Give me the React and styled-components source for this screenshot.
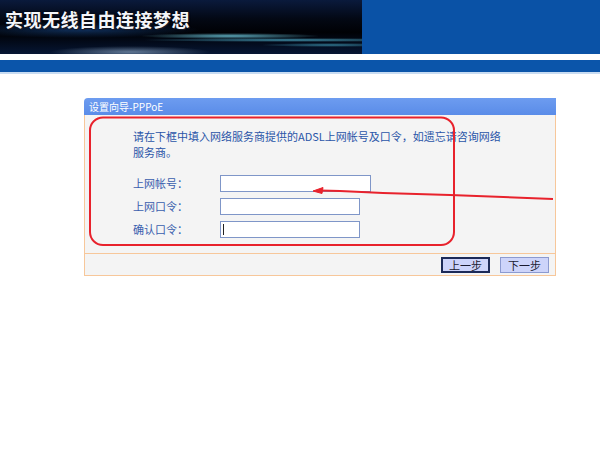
import React from "react";
import styled, { createGlobalStyle } from "styled-components";

const GlobalStyle = createGlobalStyle`
  html, body {
    margin: 0;
    padding: 0;
    background: #ffffff;
  }
  body {
    font-family: "Noto Sans CJK SC", "Liberation Sans", sans-serif;
  }
`;

export default function App() {
  return (
    <Page>
      <GlobalStyle />
      <Header>
        <Banner>
          <Slogan>实现无线自由连接梦想</Slogan>
        </Banner>
        <BannerFill />
      </Header>
      <Stripe />
      <Band />
      <Main>
        <Panel>
          <Title>设置向导-PPPoE</Title>
          <Body>
            <Intro>
              请在下框中填入网络服务商提供的ADSL上网帐号及口令，如遗忘请咨询网络服务商。
            </Intro>
            <Form>
              <Label>上网帐号：</Label>
              <Input $w={151} />
              <Label>上网口令：</Label>
              <Input $w={140} />
              <Label>确认口令：</Label>
              <Input $w={140} $focus />
            </Form>
          </Body>
          <Footer>
            <Button $active>上一步</Button>
            <Button>下一步</Button>
          </Footer>
        </Panel>
      </Main>
      <Marks width="600" height="450" viewBox="0 0 600 450">
        <rect x="90" y="117.5" width="364" height="127.5" rx="13" fill="none" stroke="#e8222c" strokeWidth="2" />
        <path d="M553 199 L450 195 L383 193 L340 191 L320 190.5" fill="none" stroke="#e8222c" strokeWidth="2" />
        <path d="M313 191 L323 187.5 L322 193.5 Z" fill="#e8222c" stroke="#e8222c" strokeWidth="1" />
      </Marks>
    </Page>
  );
}

/* Styles */

const Page = styled.div`
  position: relative;
  width: 600px;
  height: 450px;
  overflow: hidden;
  background: #ffffff;
`;

const Header = styled.div`
  display: flex;
  height: 54px;
`;

const Banner = styled.div`
  width: 362px;
  display: flex;
  align-items: flex-start;
  padding: 7px 0 0 5px;
  box-sizing: border-box;
  background:
    radial-gradient(ellipse 90px 3px at 230px 36px, rgba(120, 220, 240, 0.75), transparent),
    radial-gradient(ellipse 150px 2px at 290px 40px, rgba(90, 200, 230, 0.7), transparent),
    radial-gradient(ellipse 70px 2px at 330px 45px, rgba(80, 190, 220, 0.6), transparent),
    radial-gradient(ellipse 80px 6px at 130px 52px, rgba(170, 200, 230, 0.55), transparent),
    radial-gradient(ellipse 120px 8px at 80px 30px, rgba(30, 90, 170, 0.5), transparent),
    linear-gradient(180deg, #0a1a3c 0%, #030814 35%, #000105 60%, #061634 100%);
`;

const Slogan = styled.div`
  color: #f4f6fa;
  font-size: 18px;
  font-weight: 700;
  letter-spacing: 0.5px;
  line-height: 24px;
  text-shadow: 0 0 2px #000, 1px 1px 1px #223;
`;

const BannerFill = styled.div`
  flex: 1;
  background: #0a52a6;
`;

const Stripe = styled.div`
  height: 6px;
  background: #ffffff;
`;

const Band = styled.div`
  height: 12px;
  background: #0b55aa;
  border-bottom: 2px solid #c8dcf2;
`;

const Main = styled.div`
  padding: 24px 0 0 84px;
`;

const Panel = styled.div`
  width: 472px;
`;

const Title = styled.div`
  height: 17px;
  line-height: 17px;
  padding-left: 5px;
  background: linear-gradient(180deg, #6d9cf0 0%, #5a8ce8 100%);
  border-radius: 4px 0 0 0;
  color: #ffffff;
  font-size: 10px;
`;

const Body = styled.div`
  height: 138px;
  box-sizing: border-box;
  padding: 13px 0 0 48px;
  background: #f4f4f4;
  border-left: 1px solid #f7c79a;
  border-right: 1px solid #f7c79a;
`;

const Intro = styled.p`
  margin: 0;
  width: 378px;
  color: #2a55a8;
  font-size: 11px;
  line-height: 16px;
`;

const Form = styled.div`
  display: grid;
  grid-template-columns: 87px auto;
  row-gap: 6px;
  margin-top: 15px;
  align-items: center;
`;

const Label = styled.span`
  color: #3a5eae;
  font-size: 11px;
  line-height: 17px;
`;

const Input = styled.div`
  width: ${(p) => p.$w}px;
  height: 17px;
  box-sizing: border-box;
  background: #ffffff;
  border: 1px solid #7f96c8;
  position: relative;
  ${(p) =>
    p.$focus &&
    `&::before {
      content: "";
      position: absolute;
      left: 2px;
      top: 2px;
      width: 1px;
      height: 11px;
      background: #222;
    }`}
`;

const Footer = styled.div`
  height: 23px;
  box-sizing: border-box;
  display: flex;
  justify-content: flex-end;
  align-items: center;
  gap: 10px;
  padding-right: 6px;
  background: #f4f4f4;
  border: 1px solid #f7c79a;
`;

const Button = styled.div`
  width: 49px;
  height: 16px;
  box-sizing: border-box;
  display: flex;
  align-items: center;
  justify-content: center;
  background: #cdd4fa;
  border: ${(p) => (p.$active ? "2px solid #1c2a58" : "1px solid #8c9ad0")};
  color: #1a1a30;
  font-size: 11px;
`;

const Marks = styled.svg`
  position: absolute;
  left: 0;
  top: 0;
  pointer-events: none;
`;
